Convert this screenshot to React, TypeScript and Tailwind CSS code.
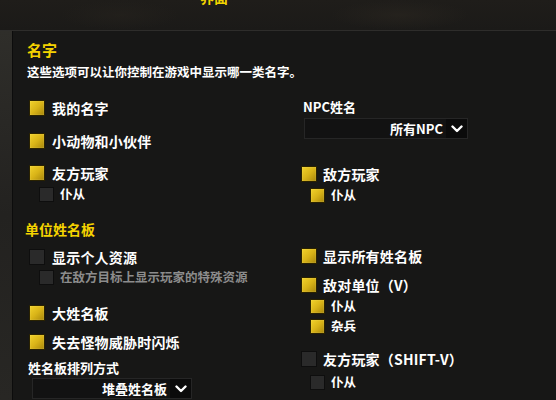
import React from "react";

const FONT = { fontFamily: '"Noto Sans CJK SC", "Noto Sans", sans-serif' };

function Box({ on, sub }: { on: boolean; sub?: boolean }) {
  const size = sub ? "w-[15px] h-[15px]" : "w-[16px] h-[16px]";
  return on ? (
    <div
      className={`${size} shrink-0 border border-[#2a2200] bg-gradient-to-br from-[#f2d22a] via-[#d9b418] to-[#a9880c] shadow-[inset_0_0_1px_#fff3a0]`}
    />
  ) : (
    <div className={`${size} shrink-0 border border-[#0e0e0e] bg-[#2a2a2a]`} />
  );
}

function Row({
  on,
  label,
  className = "",
  gap = "gap-[7px]",
}: {
  on: boolean;
  label: string;
  className?: string;
  gap?: string;
}) {
  return (
    <div className={`flex items-center h-[20px] ${gap} ${className}`}>
      <Box on={on} />
      <span className="text-[14px] font-bold text-white leading-[20px] whitespace-nowrap tracking-[0.2px]">
        {label}
      </span>
    </div>
  );
}

function Sub({
  on,
  label,
  className = "",
  dim,
}: {
  on: boolean;
  label: string;
  className?: string;
  dim?: boolean;
}) {
  return (
    <div className={`flex items-center h-[20px] gap-[6px] ${className}`}>
      <Box on={on} sub />
      <span
        className={`text-[12.5px] font-bold leading-[20px] whitespace-nowrap ${
          dim ? "text-[#8c8c8c]" : "text-white"
        }`}
      >
        {label}
      </span>
    </div>
  );
}

function Chevron() {
  return (
    <svg width="12" height="8" viewBox="0 0 12 8">
      <path d="M1.5 1.5 L6 6 L10.5 1.5" stroke="#fff" strokeWidth="2.4" fill="none" strokeLinecap="round" strokeLinejoin="round" />
    </svg>
  );
}

function Dropdown({ text, className = "" }: { text: string; className?: string }) {
  return (
    <div className={`flex h-[21px] bg-[#121212] border border-[#262626] ${className}`}>
      <div className="flex-1 flex items-center justify-end pr-[3px] text-[13px] font-bold text-white leading-[20px] whitespace-nowrap">
        {text}
      </div>
      <div className="w-[21px] flex items-center justify-center bg-[#0b0b0b]">
        <Chevron />
      </div>
    </div>
  );
}

export default function App() {
  return (
    <div className="w-[556px] h-[400px] overflow-hidden bg-[#1a1918] flex flex-col" style={FONT}>
      {/* top bar */}
      <div className="h-[31px] shrink-0 relative bg-gradient-to-b from-[#1f1d1a] to-[#1b1a18] border-b border-[#2e2d2b]">
        <div className="absolute left-[200px] top-[-11px] text-[14px] font-bold text-[#f2d400] leading-[16px]">
          界面
        </div>
        <div className="absolute left-[330px] top-0 w-[140px] h-[30px] bg-[radial-gradient(ellipse_at_center,#2a2620_0%,transparent_70%)] opacity-60" />
        <div className="absolute left-[60px] top-0 w-[120px] h-[30px] bg-[radial-gradient(ellipse_at_center,#25221d_0%,transparent_70%)] opacity-60" />
      </div>
      <div className="flex flex-1 min-h-0">
        {/* left strip */}
        <div className="w-[12px] shrink-0 bg-gradient-to-b from-[#2f2e2a] via-[#232220] to-[#282724]" />
        {/* panel */}
        <div className="flex-1 bg-[#171716] border-l border-[#0c0c0c] pl-[14px] pt-[11px]">
          <div className="text-[15px] font-bold text-[#f5d300] leading-[16px]">名字</div>
          <div className="mt-[6px] text-[12.5px] font-bold text-white leading-[16px] whitespace-nowrap">
            这些选项可以让你控制在游戏中显示哪一类名字。
          </div>
          <div className="flex">
            {/* left column */}
            <div className="w-[273px] shrink-0 flex flex-col">
              <Row on label="我的名字" className="mt-[18px] ml-[2px]" />
              <Row on label="小动物和小伙伴" className="mt-[13px] ml-[2px]" />
              <Row on label="友方玩家" className="mt-[12px] ml-[2px]" />
              <Sub on={false} label="仆从" className="mt-[1px] ml-[12px]" />
              <div className="mt-[15px] -ml-[2px] h-[20px] text-[14px] font-bold text-[#f5d300] leading-[20px]">
                单位姓名板
              </div>
              <Row on={false} label="显示个人资源" className="mt-[8px] ml-[2px]" />
              <Sub on={false} dim label="在敌方目标上显示玩家的特殊资源" className="mt-0 ml-[12px]" />
              <Row on label="大姓名板" className="mt-[16px] ml-[2px]" />
              <Row on label="失去怪物威胁时闪烁" className="mt-[9px] ml-[2px]" />
              <div className="mt-[6px] ml-[1px] h-[20px] text-[13px] font-bold text-white leading-[20px]">
                姓名板排列方式
              </div>
              <Dropdown text="堆叠姓名板" className="mt-0 ml-[5px] w-[160px]" />
            </div>
            {/* right column */}
            <div className="flex-1 flex flex-col">
              <div className="mt-[17px] ml-[3px] h-[20px] text-[13px] font-bold text-white leading-[20px]">
                NPC姓名
              </div>
              <Dropdown text="所有NPC" className="mt-[1px] ml-[4px] w-[164px]" />
              <Row on label="敌方玩家" gap="gap-[6px]" className="mt-[25px] ml-[1px]" />
              <Sub on label="仆从" className="mt-[1px] ml-[10px]" />
              <Row on label="显示所有姓名板" gap="gap-[6px]" className="mt-[41px] ml-[1px]" />
              <Row on label="敌对单位（V）" gap="gap-[6px]" className="mt-[9px] ml-[1px]" />
              <Sub on label="仆从" className="mt-[1px] ml-[10px]" />
              <Sub on label="杂兵" className="mt-0 ml-[10px]" />
              <Row on={false} label="友方玩家（SHIFT-V）" gap="gap-[6px]" className="mt-[13px] ml-[1px]" />
              <Sub on={false} label="仆从" className="mt-[3px] ml-[10px]" />
            </div>
          </div>
        </div>
      </div>
    </div>
  );
}
